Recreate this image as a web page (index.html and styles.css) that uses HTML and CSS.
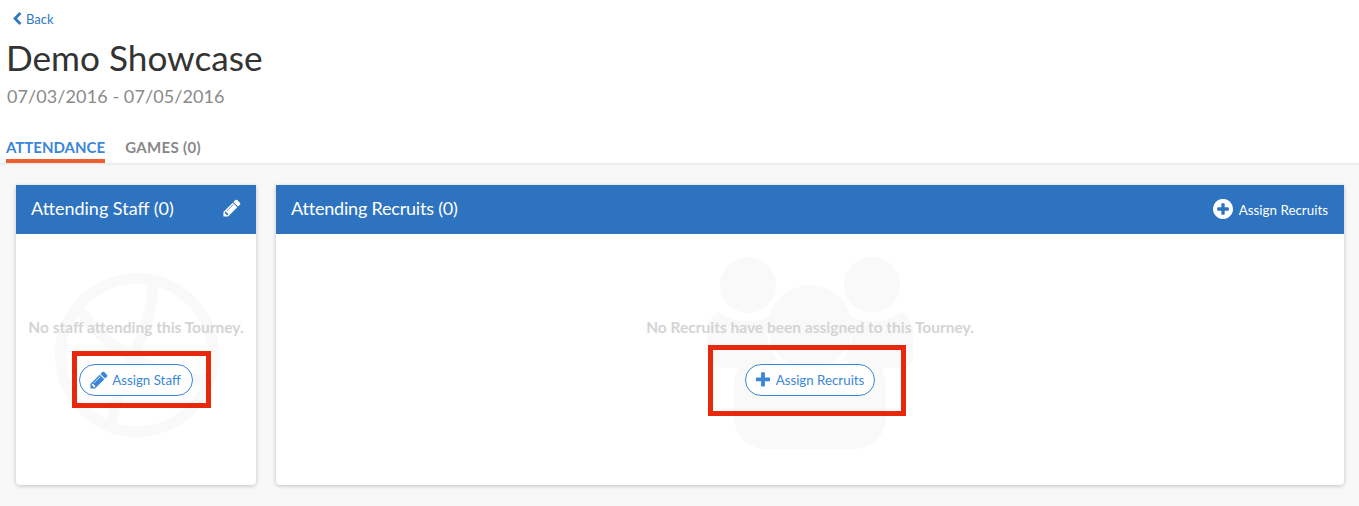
FILE: index.html
```html
<!DOCTYPE html>
<html lang="en">
<head>
<meta charset="utf-8">
<title>Demo Showcase</title>
<link rel="stylesheet" href="styles.css">
</head>
<body>
<header class="top">
  <a class="back" href="#"><svg class="back-icon" viewBox="0 0 1792 1792"><path d="M1427 301l-531 531 531 531q19 19 19 45t-19 45l-166 166q-19 19-45 19t-45-19l-742-742q-19-19-19-45t19-45l742-742q19-19 45-19t45 19l166 166q19 19 19 45t-19 45z"/></svg>Back</a>
  <h1 class="title">Demo Showcase</h1>
  <p class="dates">07/03/2016 - 07/05/2016</p>
  <nav class="tabs">
    <a class="tab tab-active" href="#">ATTENDANCE</a>
    <a class="tab tab-plain" href="#">GAMES (0)</a>
  </nav>
</header>
<main class="content">
  <section class="card card-staff">
    <div class="card-head">
      <h2 class="card-title">Attending Staff (0)</h2>
      <svg class="head-pencil" viewBox="0 0 1792 1792"><path d="M491 1536l91-91-235-235-91 91v107h128v128h107zm523-928q0-22-22-22-10 0-17 7l-542 542q-7 7-7 17 0 22 22 22 10 0 17-7l542-542q7-7 7-17zm-54-192l416 416-832 832h-416v-416zm683 96q0 53-37 90l-166 166-416-416 166-165q36-38 90-38 53 0 91 38l235 234q37 39 37 91z"/></svg>
    </div>
    <div class="card-body">
      <svg class="mark-ball" viewBox="0 0 164 164"><g fill="none" stroke="#f9f9f9" stroke-width="11"><circle cx="82" cy="82" r="76.5"/><path d="M98 10C98 62 62 100 56 155"/><path d="M24 36C50 75 100 105 158 108"/></g></svg>
      <p class="empty">No staff attending this Tourney.</p>
      <a class="pill pill-staff" href="#"><svg class="pill-icon" viewBox="0 0 1792 1792"><path d="M491 1536l91-91-235-235-91 91v107h128v128h107zm523-928q0-22-22-22-10 0-17 7l-542 542q-7 7-7 17 0 22 22 22 10 0 17-7l542-542q7-7 7-17zm-54-192l416 416-832 832h-416v-416zm683 96q0 53-37 90l-166 166-416-416 166-165q36-38 90-38 53 0 91 38l235 234q37 39 37 91z"/></svg>Assign Staff</a>
      <div class="callout callout-staff"></div>
    </div>
  </section>
  <section class="card card-recruits">
    <div class="card-head">
      <h2 class="card-title card-title-tight">Attending Recruits (0)</h2>
      <a class="head-action" href="#"><svg class="head-plus" viewBox="0 0 1536 1536"><path transform="translate(-128 -128)" d="M1344 960v-128q0-26-19-45t-45-19h-256v-256q0-26-19-45t-45-19h-128q-26 0-45 19t-19 45v256h-256q-26 0-45 19t-19 45v128q0 26 19 45t45 19h256v256q0 26 19 45t45 19h128q26 0 45-19t19-45v-256h256q26 0 45-19t19-45zm320-64q0 209-103 385.5t-279.5 279.5-385.5 103-385.5-103-279.5-279.5-103-385.5 103-385.5 279.5-279.5 385.5-103 385.5 103 279.5 279.5 103 385.5z"/></svg>Assign Recruits</a>
    </div>
    <div class="card-body">
      <svg class="mark-people" viewBox="0 0 206 192"><g fill="#f9f9f9"><circle cx="41" cy="28" r="28"/><circle cx="165" cy="28" r="28"/><path d="M12 55c8 6 18 9 29 9 8 0 16-2 22-5-5 12-3 30 7 44-14 2-24 8-28 8H14C5 111 0 106 0 98V75c0-9 5-17 12-20z"/><path d="M194 55c-8 6-18 9-29 9-8 0-16-2-22-5 5 12 3 30-7 44 14 2 24 8 28 8h28c9 0 14-5 14-13V75c0-9-5-17-12-20z"/><circle cx="103" cy="70" r="42"/><path d="M47 95c14 12 34 18 56 18s42-6 56-18c12 4 20 18 20 36v30c0 16-14 31-31 31H58c-17 0-31-15-31-31v-30c0-18 8-32 20-36z"/></g></svg>
      <p class="empty">No Recruits have been assigned to this Tourney.</p>
      <a class="pill pill-recruits" href="#"><svg class="pill-icon pill-icon-plus" viewBox="0 0 1792 1792"><path d="M1600 736v192q0 40-28 68t-68 28h-416v416q0 40-28 68t-68 28h-192q-40 0-68-28t-28-68v-416h-416q-40 0-68-28t-28-68v-192q0-40 28-68t68-28h416v-416q0-40 28-68t68-28h192q40 0 68 28t28 68v416h416q40 0 68 28t28 68z"/></svg>Assign Recruits</a>
      <div class="callout callout-recruits"></div>
    </div>
  </section>
</main>
</body>
</html>
```
FILE: styles.css
```css
* { box-sizing: border-box; }
html, body { height: 100%; }
body {
  margin: 0;
  background: #fff;
  color: #333;
  font-family: "Lato", "Liberation Sans", sans-serif;
  overflow: hidden;
}
a { text-decoration: none; }

.top { padding: 10px 0 0 6px; height: 165px; border-bottom: 2px solid #eeeeee; }
.back {
  display: flex;
  align-items: center;
  height: 17px;
  padding-left: 4px;
  font-size: 13px;
  color: #2f7abf;
}
.back-icon { width: 14px; height: 14px; margin-right: 2px; fill: #2f7abf; }
.title {
  margin: 9px 0 0;
  font-size: 35.2px;
  line-height: 42px;
  font-weight: 400;
  color: #333;
}
.dates {
  margin: 7px 0 0 1px;
  font-size: 18px;
  line-height: 22px;
  letter-spacing: 0.09px;
  color: #8a8a8a;
}
.tabs { display: flex; gap: 20px; margin-top: 28px; }
.tab {
  display: block;
  height: 28px;
  padding-top: 2px;
  font-size: 15px;
  line-height: 20px;
  font-weight: 700;
  color: #888;
}
.tab-plain { letter-spacing: 0.35px; }
.tab-active { color: #3b86d8; border-bottom: 4px solid #ee5f30; }

.content {
  display: flex;
  gap: 20px;
  height: 341px;
  padding: 20px 15px 0 16px;
  background: #f8f8f8;
}
.card {
  display: flex;
  flex-direction: column;
  height: 300px;
  background: #fff;
  border-radius: 0 0 4px 4px;
  box-shadow: 0 1px 4px rgba(0, 0, 0, 0.22);
}
.card-staff { width: 240px; flex: none; }
.card-recruits { flex: 1; }
.card-head {
  display: flex;
  align-items: center;
  justify-content: space-between;
  height: 49px;
  flex: none;
  padding: 0 16px 0 15px;
  background: #2e73bf;
  color: #fff;
}
.card-title { margin: 0 0 3px; font-size: 18px; font-weight: 400; color: #fff; }
.card-title-tight { letter-spacing: -0.2px; }
.head-pencil { width: 20px; height: 20px; margin-right: -2px; margin-bottom: 3px; fill: #fff; }
.head-action { display: flex; align-items: center; font-size: 13.4px; color: #fff; }
.head-plus { width: 20px; height: 20px; margin-right: 6px; margin-bottom: 2px; fill: #fff; }

.card-body {
  position: relative;
  flex: 1;
  display: flex;
  flex-direction: column;
  align-items: center;
  padding-top: 84px;
}
.empty {
  position: relative;
  margin: 0;
  font-size: 15.5px;
  line-height: 18px;
  font-weight: 700;
  color: #d4d4d4;
}
.pill {
  position: relative;
  display: flex;
  align-items: center;
  justify-content: center;
  height: 32px;
  margin-top: 28px;
  padding-right: 2px;
  background: #fff;
  border: 1px solid #3b86d8;
  border-radius: 16px;
  font-size: 13.3px;
  color: #3b86d8;
}
.pill-staff { width: 114px; }
.pill-recruits { width: 130px; }
.pill-icon { width: 20px; height: 20px; margin-right: 3px; fill: #3b86d8; }
.pill-icon-plus { width: 18px; height: 18px; margin-right: 4px; }

.mark-ball { position: absolute; left: 39px; top: 39px; width: 164px; height: 164px; }
.mark-people { position: absolute; left: 431px; top: 23px; width: 206px; height: 192px; }

.callout { position: absolute; border: 5px solid #e8280c; pointer-events: none; }
.callout-staff { left: 56px; top: 117px; width: 139px; height: 57px; }
.callout-recruits { left: 432px; top: 111px; width: 198px; height: 71px; }
```
